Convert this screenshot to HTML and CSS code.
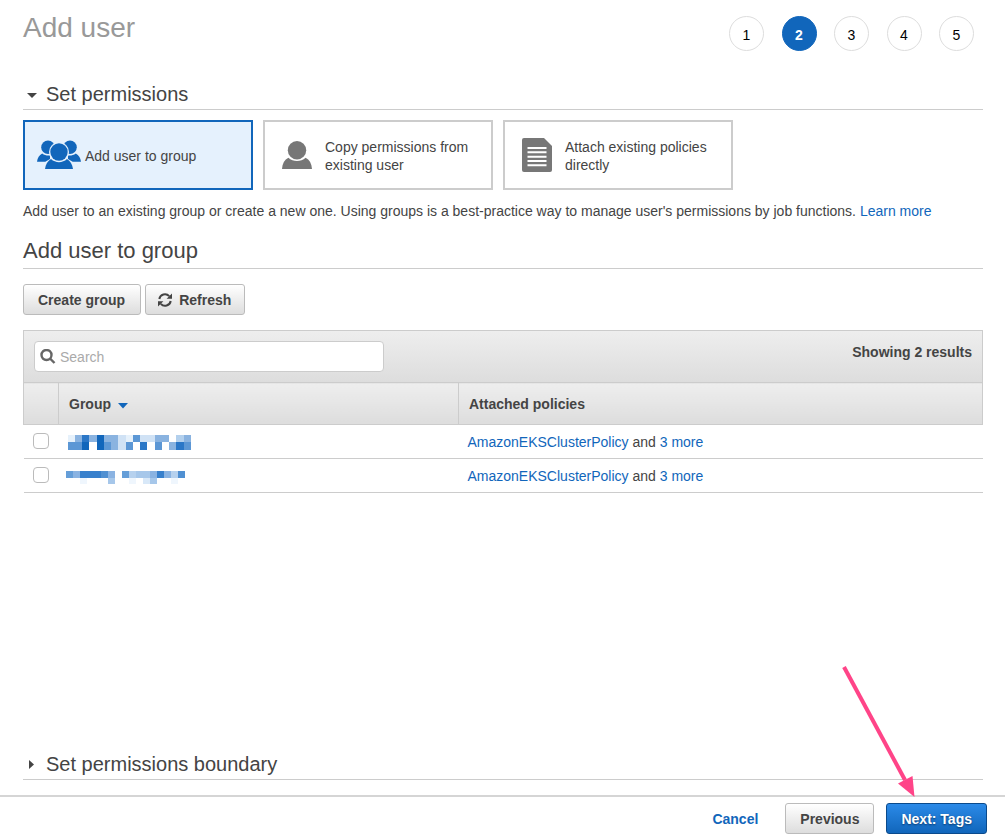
FILE: index.html
```html
<!DOCTYPE html>
<html lang="en">
<head>
<meta charset="utf-8">
<meta name="viewport" content="width=device-width, initial-scale=1">
<title>Add user</title>
<link rel="stylesheet" href="styles.css">
</head>
<body>
<main class="content">
  <header class="page-header">
    <h1 class="page-title">Add user</h1>
    <ol class="steps">
      <li class="step">1</li>
      <li class="step step-current" aria-current="step">2</li>
      <li class="step">3</li>
      <li class="step">4</li>
      <li class="step">5</li>
    </ol>
  </header>

  <h2 class="section-heading">
    <button class="disclosure" type="button" aria-expanded="true">
      <svg class="caret" viewBox="0 0 18 18" aria-hidden="true"><path d="M4 8h10l-5 5z"/></svg>Set permissions</button>
  </h2>

  <div class="options" role="radiogroup" aria-label="Permission method">
    <label class="option option-group">
      <input class="option-input" type="radio" name="method" checked>
      <svg class="icon-group" viewBox="0 0 44 30" aria-hidden="true">
        <circle cx="11" cy="7.2" r="6.800"/>
        <circle cx="33" cy="7.2" r="6.800"/>
        <path d="M0 21.700c.5-3.800 2.200-6.700 5.200-8.200 2.300 1.800 4.800 2.300 7.800 2V19l-4.700 2.700zM44 21.700c-.5-3.800-2.200-6.700-5.200-8.200-2.300 1.800-4.800 2.300-7.800 2V19l4.700 2.700z"/>
        <circle class="cutout" cx="22" cy="12" r="10"/>
        <path d="M8 29c.6-4.700 2.700-8.200 6-10 4.500 4.200 11.500 4.200 16 0 3.300 1.800 5.400 5.300 6 10z"/>
        <circle cx="22" cy="12" r="8.700"/>
      </svg>
      <span>Add user to group</span>
    </label>
    <label class="option">
      <input class="option-input" type="radio" name="method">
      <svg class="icon-option" viewBox="0 0 30 36" aria-hidden="true">
        <path d="M0 32c.3-5.500 2.500-9.300 6.400-11.300 4.800 4.300 12.400 4.300 17.200 0C27.500 22.700 29.700 26.500 30 32z"/>
        <circle cx="15" cy="13.300" r="9.200"/>
      </svg>
      <span>Copy permissions from existing user</span>
    </label>
    <label class="option">
      <input class="option-input" type="radio" name="method">
      <svg class="icon-option" viewBox="0 0 30 36" aria-hidden="true">
        <path d="M2 1h20l8 8v24a2 2 0 0 1-2 2H2a2 2 0 0 1-2-2V3a2 2 0 0 1 2-2z"/>
        <path class="doc-lines" d="M5.500 11h19M5.500 15.300h19M5.500 19.700h19M5.500 24h19M5.500 28.300h19"/>
      </svg>
      <span>Attach existing policies directly</span>
    </label>
  </div>

  <p class="intro">Add user to an existing group or create a new one. Using groups is a best-practice way to manage user's permissions by job functions. <a href="#">Learn more</a></p>

  <h2 class="subheading">Add user to group</h2>

  <div class="actions">
    <button class="btn btn-create" type="button">Create group</button>
    <button class="btn btn-refresh" type="button">
      <svg class="icon-refresh" viewBox="0 0 14 14" aria-hidden="true"><path class="arc" d="M1.300 6A5.700 5.700 0 0 1 11.200 3.200M12.700 8A5.700 5.700 0 0 1 2.800 10.800"/><path d="M14 .4v5.400H8.600zM0 13.600V8.200h5.400z"/></svg>Refresh</button>
  </div>

  <section class="groups" aria-label="Groups">
    <div class="toolbar">
      <div class="search">
        <svg class="icon-search" viewBox="0 0 16 16" aria-hidden="true"><circle cx="6.500" cy="6" r="5"/><path d="M10 9.500l4.500 4.500"/></svg>
        <input class="search-input" type="search" placeholder="Search" aria-label="Search">
      </div>
      <span class="count">Showing 2 results</span>
    </div>
    <table class="table">
      <thead>
        <tr>
          <th class="col-check"></th>
          <th class="col-name">Group <svg class="sort" viewBox="0 0 10 6" aria-hidden="true"><path d="M0 0h10l-5 5.500z"/></svg></th>
          <th>Attached policies</th>
        </tr>
      </thead>
      <tbody>
        <tr>
          <td class="col-check"><input class="check" type="checkbox" aria-label="Select first group"></td>
          <td class="name"><svg class="redacted" viewBox="0 0 126 16" role="img" aria-label="Hidden group name">
            <g transform="translate(1.500 1) scale(7.250)" shape-rendering="crispEdges">
              <path fill="#e6f1fb" d="M0 0h1v1H0zM8 0h1v1H8z"/>
              <path fill="#8ab3e0" d="M1 0h1v1H1zM3 0h1v1H3zM5 0h2v1H5zM12 0h2v1h-2zM16 0h1v1h-1zM6 1h1v1H6zM14 1h1v1h-1z"/>
              <path fill="#2b77c7" d="M2 0h1v1H2zM10 1h1v1h-1zM15 1h1v1h-1z"/>
              <path fill="#1166bb" d="M4 0h1v2H4zM2 1h1v1H2z"/>
              <path fill="#d0e2f5" d="M7 0h1v2H7zM10 0h2v1h-2z"/>
              <path fill="#b3d0ed" d="M15 0h1v1h-1z"/>
              <path fill="#5c97d5" d="M9 0h1v1H9zM0 1h2v1H0zM5 1h1v1H5zM8 1h1v1H8zM12 1h1v1h-1zM16 1h1v1h-1z"/>
            </g></svg></td>
          <td><a href="#">AmazonEKSClusterPolicy</a> and <a href="#">3 more</a></td>
        </tr>
        <tr>
          <td class="col-check"><input class="check" type="checkbox" aria-label="Select second group"></td>
          <td class="name"><svg class="redacted" viewBox="0 0 126 16" role="img" aria-label="Hidden group name">
            <g transform="translate(-.5 3) scale(7)" shape-rendering="crispEdges">
              <path fill="#659ed8" d="M0 0h1v1H0zM8 0h1v1H8z"/>
              <path fill="#8ab3e2" d="M1 0h1v1H1zM6 0h1v1H6zM12 0h1v1h-1zM14 0h1v1h-1z"/>
              <path fill="#3880cc" d="M2 0h3v1H2zM13 0h1v1h-1z"/>
              <path fill="#5090d2" d="M5 0h1v1H5zM16 0h1v1h-1z"/>
              <path fill="#b6d1ee" d="M9 0h1v1H9zM15 0h1v1h-1z"/>
              <path fill="#a6c7ea" d="M10 0h2v1h-2zM6 1h1v1H6zM12 1h1v1h-1z"/>
              <path fill="#d8e8f8" d="M11 1h1v1h-1z"/>
              <path fill="#eff6fd" d="M2 1h1v1H2zM9 1h1v1H9zM15 1h1v1h-1z"/>
            </g></svg></td>
          <td><a href="#">AmazonEKSClusterPolicy</a> and <a href="#">3 more</a></td>
        </tr>
      </tbody>
    </table>
  </section>

  <h2 class="section-heading section-boundary">
    <button class="disclosure" type="button" aria-expanded="false">
      <svg class="caret" viewBox="0 0 18 18" aria-hidden="true"><path d="M6 5v9l5-4.500z"/></svg>Set permissions boundary</button>
  </h2>
</main>

<footer class="footer">
  <a class="cancel" href="#">Cancel</a>
  <button class="btn" type="button">Previous</button>
  <button class="btn btn-primary" type="button">Next: Tags</button>
  <svg class="pointer" viewBox="0 0 76 134" aria-hidden="true"><path class="shaft" d="M3 3l61 113"/><path d="M73.500 133L57 119.500 71.500 112z"/></svg>
</footer>
</body>
</html>
```
FILE: styles.css
```css
* {
  box-sizing: border-box;
}

body {
  margin: 0;
  min-height: 100vh;
  display: flex;
  flex-direction: column;
  background: #fff;
  color: #444;
  font: 14px/18px "Liberation Sans", Arial, sans-serif;
}

button,
input {
  font: inherit;
  color: inherit;
}

a {
  color: #1166bb;
  text-decoration: none;
}

svg {
  flex: none;
  fill: currentColor;
}

.content {
  flex: 1;
  display: flex;
  flex-direction: column;
  padding: 16px 22px 15px 23px;
}

.page-header {
  display: flex;
  justify-content: space-between;
  align-items: flex-start;
  padding-right: 9px;
}

.page-title {
  margin: 0;
  color: #999;
  font-size: 28px;
  font-weight: normal;
  line-height: 24px;
}

.steps {
  display: flex;
  justify-content: space-between;
  width: 245px;
  margin: 0;
  padding: 0;
  list-style: none;
}

.step {
  width: 35px;
  height: 35px;
  border: 1px solid #ddd;
  border-radius: 50%;
  color: #000;
  line-height: 36px;
  text-align: center;
}

.step-current {
  border-color: #1166bb;
  background: #1166bb;
  color: #fff;
  font-weight: bold;
}

.section-heading {
  margin: 30px 0 0;
  padding-bottom: 2px;
  border-bottom: 1px solid #ccc;
  font-size: 20px;
  font-weight: normal;
  line-height: 26px;
}

.section-boundary {
  margin-top: auto;
}

.disclosure {
  display: flex;
  align-items: center;
  gap: 5px;
  padding: 0;
  border: 0;
  background: none;
}

.caret {
  width: 18px;
  height: 18px;
}

.options {
  display: flex;
  flex-wrap: wrap;
  gap: 10px;
  margin-top: 10px;
}

.option {
  position: relative;
  display: flex;
  align-items: center;
  gap: 13px;
  width: 230px;
  height: 70px;
  padding: 0 16px 0 17px;
  border: 2px solid #ccc;
}

.option span {
  padding-top: 2px;
}

.option:has(:checked) {
  border-color: #1166bb;
  background: #e5f1fd;
}

.option-group {
  gap: 4px;
  padding: 0 12px;
}

.option-input {
  position: absolute;
  opacity: 0;
}

.icon-group {
  width: 44px;
  height: 30px;
  color: #1166bb;
}

.cutout {
  fill: #e5f1fd;
}

.icon-option {
  width: 30px;
  height: 36px;
  color: #777;
}

.doc-lines {
  fill: none;
  stroke: #fff;
  stroke-width: 2;
}

.intro {
  margin: 12px 0 0;
}

.subheading {
  margin: 18px 0 0;
  padding-bottom: 4px;
  border-bottom: 1px solid #ccc;
  font-size: 22px;
  font-weight: normal;
  line-height: 26px;
}

.actions {
  display: flex;
  gap: 4px;
  margin: 15px 0;
}

.btn {
  display: flex;
  align-items: center;
  height: 31px;
  padding: 0 14px;
  border: 1px solid #bbb;
  border-radius: 3px;
  background: linear-gradient(#fff, #ddd);
  font-weight: bold;
}

.btn-create {
  padding-right: 15px;
}

.btn-refresh {
  gap: 7px;
  padding: 0 13px 0 12px;
}

.icon-refresh {
  width: 14px;
  height: 14px;
}

.arc {
  fill: none;
  stroke: currentColor;
  stroke-width: 2;
}

.btn-primary {
  border-color: #0a4a8c;
  background: linear-gradient(#2b8ae8, #1166bb);
  color: #fff;
  text-shadow: 0 1px 2px #0a3a6c;
}

.toolbar {
  display: flex;
  justify-content: space-between;
  align-items: flex-start;
  padding: 10px;
  border: 1px solid #ccc;
  border-bottom: 0;
  background: linear-gradient(#eee, #ddd);
}

.search {
  display: flex;
  align-items: center;
  gap: 4px;
  width: 350px;
  height: 31px;
  padding: 0 5px;
  border: 1px solid #ccc;
  border-radius: 4px;
  background: #fff;
}

.icon-search {
  width: 16px;
  height: 16px;
  fill: none;
  stroke: #666;
  stroke-width: 2.4;
}

.search-input {
  flex: 1;
  min-width: 0;
  padding: 0;
  border: 0;
  outline: 0;
  background: none;
}

.search-input::placeholder {
  color: #aaa;
}

.count {
  padding-top: 2px;
  font-weight: bold;
}

.table {
  width: 100%;
  border-collapse: collapse;
  table-layout: fixed;
}

.table th {
  height: 42px;
  padding: 0 10px;
  border: 1px solid #ccc;
  border-right: 0;
  background: linear-gradient(#eee, #ddd);
  text-align: left;
}

.table th:last-child {
  border-right: 1px solid #ccc;
}

.table td {
  height: 34px;
  padding: 0 9px;
  border-bottom: 1px solid #ccc;
}

.table .col-check {
  width: 35px;
}

.table td.col-check {
  padding-bottom: 2px;
}

.col-name {
  width: 400px;
}

.sort {
  width: 10px;
  height: 6px;
  margin-left: 3px;
  color: #1166bb;
}

.table .name {
  padding: 0 7px;
}

.check {
  display: block;
  width: 16px;
  height: 16px;
  margin: 0;
  border: 1px solid #bbb;
  border-radius: 4px;
  background: #fff;
  appearance: none;
}

.check:checked {
  background: #1166bb;
}

.redacted {
  display: block;
  width: 126px;
  height: 16px;
}

.footer {
  position: relative;
  display: flex;
  justify-content: flex-end;
  align-items: center;
  gap: 12px;
  padding: 6px 18px;
  border-top: 2px solid #d5d5d5;
  background: #fff;
}

.cancel {
  margin-right: 15px;
  font-weight: bold;
}

.pointer {
  position: absolute;
  right: 88px;
  bottom: 42px;
  width: 76px;
  height: 134px;
  color: #ff4488;
  pointer-events: none;
}

.shaft {
  stroke: currentColor;
  stroke-width: 4;
}
```
